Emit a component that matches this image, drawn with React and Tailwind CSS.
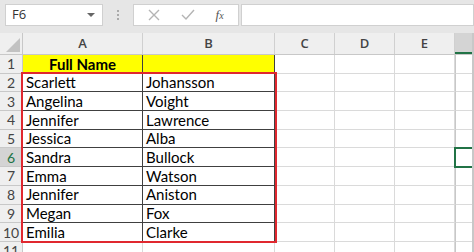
import React from "react";

const rows = [
  ["Full Name", ""],
  ["Scarlett", "Johansson"],
  ["Angelina", "Voight"],
  ["Jennifer", "Lawrence"],
  ["Jessica", "Alba"],
  ["Sandra", "Bullock"],
  ["Emma", "Watson"],
  ["Jennifer", "Aniston"],
  ["Megan", "Fox"],
  ["Emilia", "Clarke"],
  ["", ""],
];

const cols = [
  { name: "A", w: "w-[120px]" },
  { name: "B", w: "w-[132px]" },
  { name: "C", w: "w-[60px]" },
  { name: "D", w: "w-[60px]" },
  { name: "E", w: "w-[60px]" },
];

const font = { fontFamily: '"Open Sans", "Noto Sans", sans-serif' };
const cellFont = { fontFamily: 'Lato, "Open Sans", sans-serif' };

export default function App() {
  return (
    <div
      className="w-[474px] h-[252px] overflow-hidden bg-white relative"
      style={font}
    >
      {/* formula bar */}
      <div className="h-[33px] bg-[#e6e6e6] flex items-start pt-[4px] pl-[5px]">
        <div className="w-[98px] h-[22px] bg-white border border-[#d0d0d0] flex items-center justify-between px-[6px]">
          <span className="text-[13px] text-[#333]">F6</span>
          <svg width="8" height="5" viewBox="0 0 8 5" className="mr-[1px]">
            <path d="M0 0 L8 0 L4 4 Z" fill="#666" />
          </svg>
        </div>
        <div className="w-[30px] h-[22px] flex flex-col items-center justify-center gap-[2px]">
          <span className="w-[2px] h-[2px] bg-[#aaa]" />
          <span className="w-[2px] h-[2px] bg-[#aaa]" />
          <span className="w-[2px] h-[2px] bg-[#aaa]" />
        </div>
        <div className="w-[106px] h-[22px] bg-white border border-[#d0d0d0] flex items-center justify-around px-[4px]">
          <svg width="12" height="12" viewBox="0 0 12 12">
            <path d="M1 1 L11 11 M11 1 L1 11" stroke="#b4b4b4" strokeWidth="1.4" />
          </svg>
          <svg width="14" height="12" viewBox="0 0 14 12">
            <path d="M1 6 L5 10 L13 1" stroke="#b4b4b4" strokeWidth="1.4" fill="none" />
          </svg>
          <span
            className="text-[13px] italic text-[#555]"
            style={{ fontFamily: '"Liberation Serif", serif' }}
          >
            f<span className="text-[10px]">x</span>
          </span>
        </div>
        <div className="w-[2px]" />
        <div className="flex-1 h-[22px] bg-white border border-[#d0d0d0]" />
      </div>

      {/* column headers */}
      <div className="flex h-[22px] bg-[#efefef] border-b border-[#c8c8c8]">
        <div className="w-[23px] border-r border-[#c8c8c8] flex items-end justify-end p-[2px]">
          <svg width="14" height="14" viewBox="0 0 14 14">
            <path d="M14 0 L14 14 L0 14 Z" fill="#c2c2c2" />
          </svg>
        </div>
        {cols.map((c) => (
          <div
            key={c.name}
            className={`${c.w} border-r border-[#d0d0d0] flex items-center justify-center text-[13px] text-[#444] font-semibold`}
          >
            {c.name}
          </div>
        ))}
        <div className="flex-1 bg-[#d4d4d4] border-b-2 border-[#217346]" />
      </div>

      {/* grid */}
      {rows.map((r, i) => {
        const n = i + 1;
        const inData = n <= 10;
        const sel = n === 6;
        return (
          <div key={n} className="flex h-[18.7px]">
            <div
              className={`w-[23px] shrink-0 flex items-center justify-center text-[14px] border-r border-b border-[#c8c8c8] ${
                sel
                  ? "bg-[#d4d4d4] text-[#217346] border-r-[#217346]"
                  : "bg-[#efefef] text-[#444]"
              }`}
              style={cellFont}
            >
              {n}
            </div>
            {cols.map((c, j) => {
              const dark = inData && j < 2;
              const header = n === 1 && j < 2;
              return (
                <div
                  key={c.name}
                  className={`${c.w} shrink-0 border-r border-b flex items-center px-[3px] text-[15px] text-black whitespace-nowrap ${
                    dark ? "border-[#404040]" : "border-[#dadada]"
                  } ${header ? "bg-[#ffff00]" : ""} ${
                    header && j === 0 ? "justify-center font-bold" : ""
                  }`}
                  style={cellFont}
                >
                  {r[j]}
                </div>
              );
            })}
            <div className="flex-1 border-b border-[#dadada] border-l border-l-[#c8c8c8]" />
          </div>
        );
      })}

      {/* red selection outline */}
      <div className="absolute left-[21px] top-[72px] w-[256px] h-[171px] border-2 border-[#e0282f] pointer-events-none" />
      {/* active cell F6 */}
      <div className="absolute left-[454px] top-[147px] w-[30px] h-[21px] border-2 border-[#217346] pointer-events-none" />
      <div className="absolute right-0 top-[33px] w-[2px] h-[219px] bg-[#c8c8c8]" />
    </div>
  );
}
